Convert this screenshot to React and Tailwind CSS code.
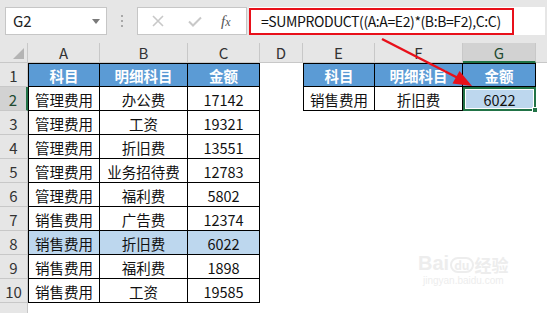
import { useMemo } from "react";

const COLS = ["A", "B", "C", "D", "E", "F", "G"];

const LEFT_ROWS = [
  ["管理费用", "办公费", "17142"],
  ["管理费用", "工资", "19321"],
  ["管理费用", "折旧费", "13551"],
  ["管理费用", "业务招待费", "12783"],
  ["管理费用", "福利费", "5802"],
  ["销售费用", "广告费", "12374"],
  ["销售费用", "折旧费", "6022"],
  ["销售费用", "福利费", "1898"],
  ["销售费用", "工资", "19585"],
];

const FONT = { fontFamily: '"Noto Sans CJK SC", "Noto Sans", sans-serif' };

function TopBar() {
  return (
    <div className="flex h-[43px] items-start bg-[#e6e6e6] pt-[7px]">
      <div className="ml-[5px] flex h-[28px] w-[102px] items-center justify-between border border-[#c6c6c6] bg-white pl-[7px] pr-[6px]">
        <span className="text-[15px] text-[#222]">G2</span>
        <svg width="8" height="5" viewBox="0 0 8 5">
          <polygon points="0,0 8,0 4,5" fill="#7a7a7a" />
        </svg>
      </div>
      <div className="flex h-[28px] w-[30px] items-center justify-center">
        <svg width="4" height="14" viewBox="0 0 4 14">
          <rect x="1" y="1" width="2" height="2" fill="#a8a8a8" />
          <rect x="1" y="6" width="2" height="2" fill="#a8a8a8" />
          <rect x="1" y="11" width="2" height="2" fill="#a8a8a8" />
        </svg>
      </div>
      <div className="flex h-[28px] w-[110px] items-center border border-[#c6c6c6] bg-white">
        <svg className="ml-[14px]" width="12" height="12" viewBox="0 0 12 12">
          <path d="M1 1 L11 11 M11 1 L1 11" stroke="#c8c8c8" strokeWidth="1.6" />
        </svg>
        <svg className="ml-[24px]" width="14" height="11" viewBox="0 0 14 11">
          <path d="M1 5.5 L5 9.5 L13 1.5" stroke="#c8c8c8" strokeWidth="2" fill="none" />
        </svg>
        <span
          className="ml-[19px] text-[15px] italic text-[#555]"
          style={{ fontFamily: '"Liberation Serif", serif' }}
        >
          f<span className="text-[12px]">x</span>
        </span>
      </div>
      <div className="ml-[2px] mr-[2px] flex h-[28px] flex-1 items-center bg-white pl-[12px]">
        <span className="text-[14px] tracking-[-0.4px] text-[#111]">
          =SUMPRODUCT((A:A=E2)*(B:B=F2),C:C)
        </span>
      </div>
    </div>
  );
}

function Cell({ className, children }) {
  return (
    <div className={`flex items-center justify-center overflow-hidden whitespace-nowrap pt-[2px] ${className}`}>
      {children}
    </div>
  );
}

export default function App() {
  const cells = useMemo(() => {
    const out = [];
    // column header row
    out.push(
      <div key="corner" className="relative border-b border-r border-[#c8c8c8] bg-[#e6e6e6]">
        <svg className="absolute bottom-[3px] right-[3px]" width="11" height="11" viewBox="0 0 11 11">
          <polygon points="11,0 11,11 0,11" fill="#b4b4b4" />
        </svg>
      </div>
    );
    COLS.forEach((c) => {
      out.push(
        c === "G" ? (
          <Cell key={`h${c}`} className="border-b-2 border-r border-b-[#217346] border-r-[#c8c8c8] bg-[#d2d2d2] text-[15px] text-[#1e4a30]">
            {c}
          </Cell>
        ) : (
          <Cell key={`h${c}`} className="border-b border-r border-[#c8c8c8] bg-[#e6e6e6] text-[15px] text-[#333]">
            {c}
          </Cell>
        )
      );
    });
    out.push(<div key="hH" className="border-b border-[#c8c8c8] bg-[#e6e6e6]" />);

    for (let r = 1; r <= 10; r++) {
      out.push(
        r === 2 ? (
          <Cell key={`r${r}`} className="border-b border-r-2 border-b-[#c8c8c8] border-r-[#217346] bg-[#d2d2d2] pt-[4px] text-[15px] text-[#1e4a30]">
            {r}
          </Cell>
        ) : (
          <Cell key={`r${r}`} className="border-b border-r border-[#c8c8c8] bg-[#e6e6e6] pt-[4px] text-[15px] text-[#333]">
            {r}
          </Cell>
        )
      );

      // A-C table
      const left =
        r === 1 ? ["科目", "明细科目", "金额"] : LEFT_ROWS[r - 2];
      left.forEach((v, i) => {
        const base = `border-b border-r border-black text-[14.5px] ${i === 0 ? "border-l" : ""} ${r === 1 ? "border-t" : ""}`;
        if (r === 1) {
          out.push(
            <Cell key={`L${r}${i}`} className={`${base} bg-[#5b9bd5] font-bold text-white`}>
              {v}
            </Cell>
          );
        } else if (r === 8) {
          out.push(
            <Cell key={`L${r}${i}`} className={`${base} bg-[#bdd7ee] text-[#111]`}>
              {v}
            </Cell>
          );
        } else {
          out.push(
            <Cell key={`L${r}${i}`} className={`${base} bg-white text-[#111]`}>
              {v}
            </Cell>
          );
        }
      });

      // D
      out.push(<div key={`D${r}`} className="bg-white" />);

      // E-G table
      if (r === 1) {
        ["科目", "明细科目", "金额"].forEach((v, i) => {
          out.push(
            <Cell key={`R${r}${i}`} className={`border-b border-r border-t border-black bg-[#5b9bd5] text-[14.5px] font-bold text-white ${i === 0 ? "border-l" : ""}`}>
              {v}
            </Cell>
          );
        });
      } else if (r === 2) {
        out.push(
          <Cell key="R20" className="border-b border-l border-r border-black bg-white text-[14.5px] text-[#111]">
            销售费用
          </Cell>
        );
        out.push(
          <Cell key="R21" className="border-b border-r border-black bg-white text-[14.5px] text-[#111]">
            折旧费
          </Cell>
        );
        out.push(
          <div key="R22" className="relative border-2 border-[#217346] bg-white p-[1px]">
            <div className="flex h-full items-center justify-center bg-[#bdd7ee] pt-[2px] text-[14.5px] text-[#111]">
              6022
            </div>
            <div className="absolute bottom-[-4px] right-[-4px] h-[6px] w-[6px] border border-white bg-[#217346]" />
          </div>
        );
      } else {
        out.push(<div key={`R${r}0`} className="bg-white" />);
        out.push(<div key={`R${r}1`} className="bg-white" />);
        out.push(<div key={`R${r}2`} className="bg-white" />);
      }
      out.push(<div key={`H${r}`} className="bg-white" />);
    }

    // row 11 partial
    out.push(<div key="r11" className="border-r border-[#c8c8c8] bg-[#e6e6e6]" />);
    for (let i = 0; i < 8; i++) out.push(<div key={`e${i}`} className="bg-white" />);
    return out;
  }, []);

  return (
    <div className="relative h-[313px] w-[547px] overflow-hidden bg-white" style={FONT}>
      <TopBar />
      <div className="grid grid-cols-[28px_72px_88px_72px_43px_72px_88px_73px_11px] grid-rows-[20px_repeat(10,24px)_10px]">
        {cells}
      </div>

      {/* red highlight around formula */}
      <div className="pointer-events-none absolute left-[249px] top-[8px] h-[27px] w-[265px] border-2 border-[#e8101a]" />

      {/* arrow */}
      <svg className="pointer-events-none absolute inset-0" width="547" height="313">
        <line x1="382" y1="39" x2="458" y2="78" stroke="#e8101a" strokeWidth="2.5" />
        <polygon points="472,86 452.5,83.5 459.5,71" fill="#e8101a" />
      </svg>

      {/* watermark */}
      <div className="pointer-events-none absolute left-[418px] top-[253px] flex flex-col items-center text-[#ededed]">
        <div className="flex items-end leading-none">
          <span className="text-[20px] font-bold" style={{ fontFamily: '"Liberation Sans", sans-serif' }}>Bai</span>
          <span className="mx-[1px] rounded-full border-2 border-[#ededed] px-[2px] text-[12px] font-bold">du</span>
          <span className="text-[17px] font-bold">经验</span>
        </div>
        <span className="mt-[3px] text-[10px] leading-none" style={{ fontFamily: '"Liberation Sans", sans-serif' }}>
          jingyan.baidu.com
        </span>
      </div>
    </div>
  );
}
